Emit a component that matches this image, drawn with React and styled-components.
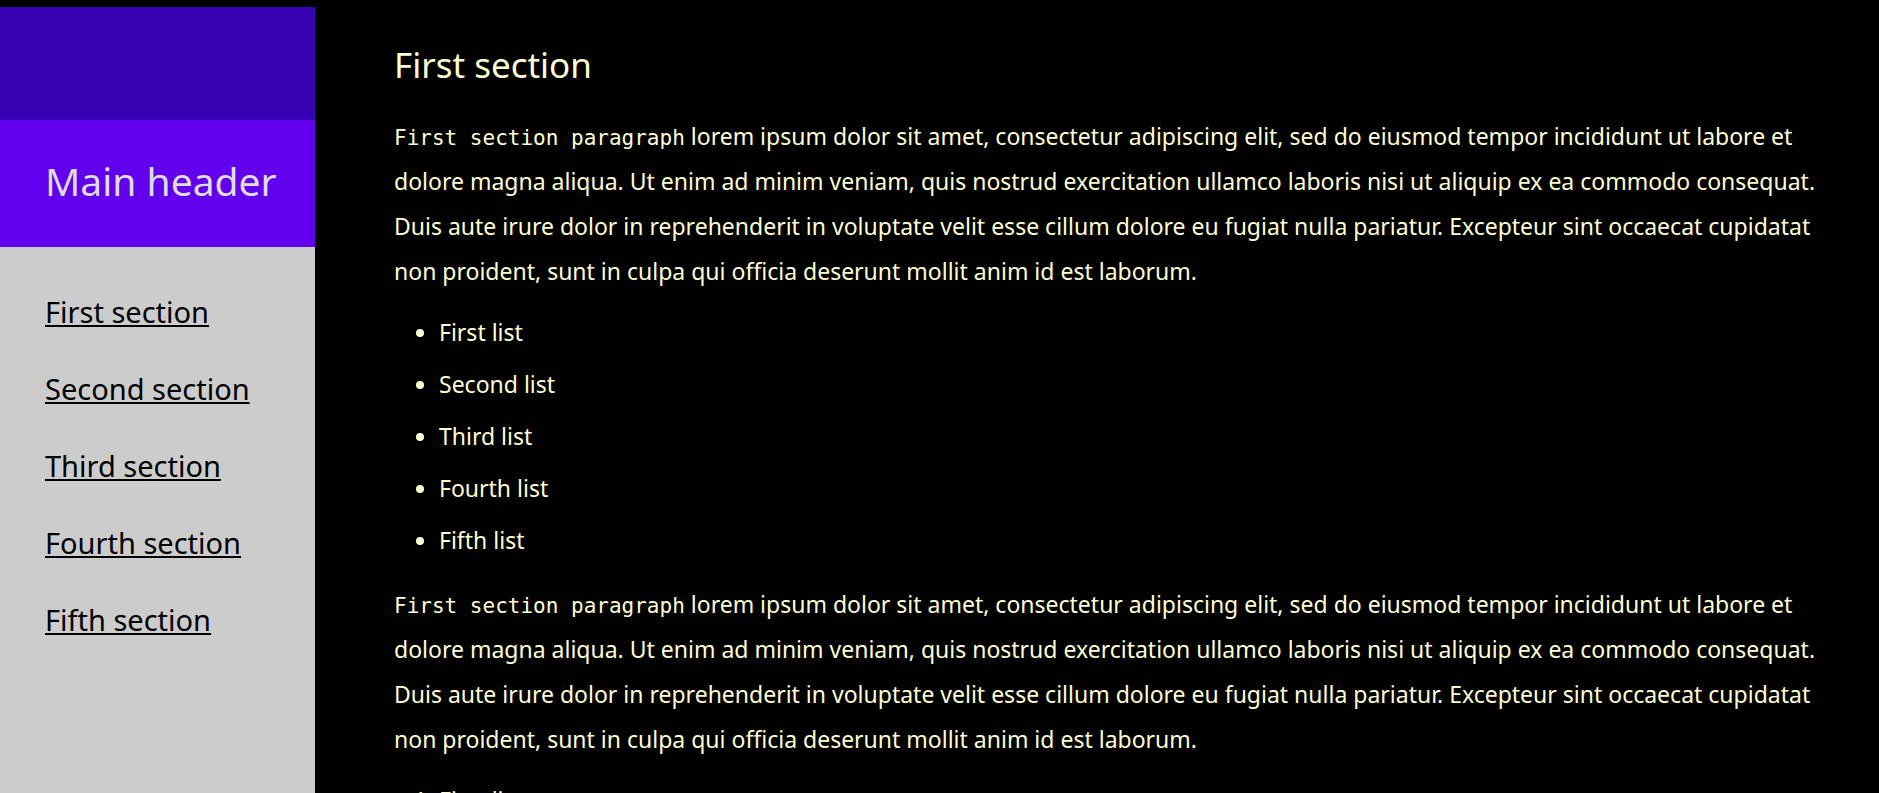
import React from "react";
import styled, { createGlobalStyle } from "styled-components";

const GlobalStyle = createGlobalStyle`
  * { box-sizing: border-box; }
  body {
    margin: 0;
    background: #000;
    font-family: "Noto Sans", "Open Sans", sans-serif;
  }
`;

const Page = styled.div`
  display: flex;
  height: 100vh;
  padding-top: 7px;
  background: #000;
`;

const Sidebar = styled.aside`
  display: flex;
  flex-direction: column;
  flex: 0 0 315px;
  background: #ccc;
`;

const Banner = styled.div`
  flex: none;
  height: 113px;
  background: #3700b3;
`;

const Header = styled.header`
  padding: 34px 0 39px 45px;
  background: #6200ee;
`;

const Title = styled.h1`
  margin: 0;
  font-size: 39px;
  font-weight: 400;
  line-height: 54px;
  white-space: nowrap;
  color: #ddd;
`;

const Nav = styled.nav`
  display: flex;
  flex-direction: column;
  align-items: flex-start;
  gap: 32px;
  padding: 42px 0 42px 45px;
`;

const NavLink = styled.a`
  font-size: 29px;
  line-height: 45px;
  color: #000;
  text-decoration: underline;
  text-decoration-thickness: 2px;
  text-underline-offset: 2px;
`;

const Content = styled.main`
  flex: 1;
  min-width: 0;
  overflow-y: auto;
  scrollbar-width: none;
  padding: 34px 32px 34px 79px;
  color: #ffffd2;
`;

const Section = styled.section`
  margin-bottom: 48px;
`;

const SectionTitle = styled.h2`
  margin: 0 0 25px;
  font-size: 35px;
  font-weight: 400;
  line-height: 48px;
`;

const Paragraph = styled.p`
  margin: 0 0 16px;
  font-size: 23px;
  line-height: 45px;
`;

const Code = styled.code`
  font-family: "DejaVu Sans Mono", monospace;
  font-size: 21px;
  line-height: 1;
`;

const List = styled.ul`
  display: grid;
  gap: 7px;
  margin: 0 0 19px;
  padding-left: 45px;
  list-style-type: ${(p) => (p.$numbered ? "decimal" : "disc")};
  font-size: 23px;
  line-height: 45px;
`;

const names = ["First", "Second", "Third", "Fourth", "Fifth"];

function TextBlock({ name, numbered }) {
  return (
    <>
      <Paragraph>
        <Code>{`${name} section paragraph`}</Code> lorem ipsum dolor sit amet,
        consectetur adipiscing elit, sed do eiusmod tempor incididunt ut labore
        et dolore magna aliqua. Ut enim ad minim veniam, quis nostrud
        exercitation ullamco laboris nisi ut aliquip ex ea commodo consequat.
        Duis aute irure dolor in reprehenderit in voluptate velit esse cillum
        dolore eu fugiat nulla pariatur. Excepteur sint occaecat cupidatat non
        proident, sunt in culpa qui officia deserunt mollit anim id est laborum.
      </Paragraph>
      <List as={numbered ? "ol" : "ul"} $numbered={numbered}>
        {names.map((item) => (
          <li key={item}>{`${item} list`}</li>
        ))}
      </List>
    </>
  );
}

export default function App() {
  return (
    <>
      <GlobalStyle />
      <Page>
        <Sidebar>
          <Banner />
          <Header>
            <Title>Main header</Title>
          </Header>
          <Nav>
            {names.map((name) => (
              <NavLink key={name} href={`#${name.toLowerCase()}`}>
                {`${name} section`}
              </NavLink>
            ))}
          </Nav>
        </Sidebar>
        <Content>
          <Section id="first">
            <SectionTitle>First section</SectionTitle>
            <TextBlock name="First" />
            <TextBlock name="First" numbered />
          </Section>
        </Content>
      </Page>
    </>
  );
}
